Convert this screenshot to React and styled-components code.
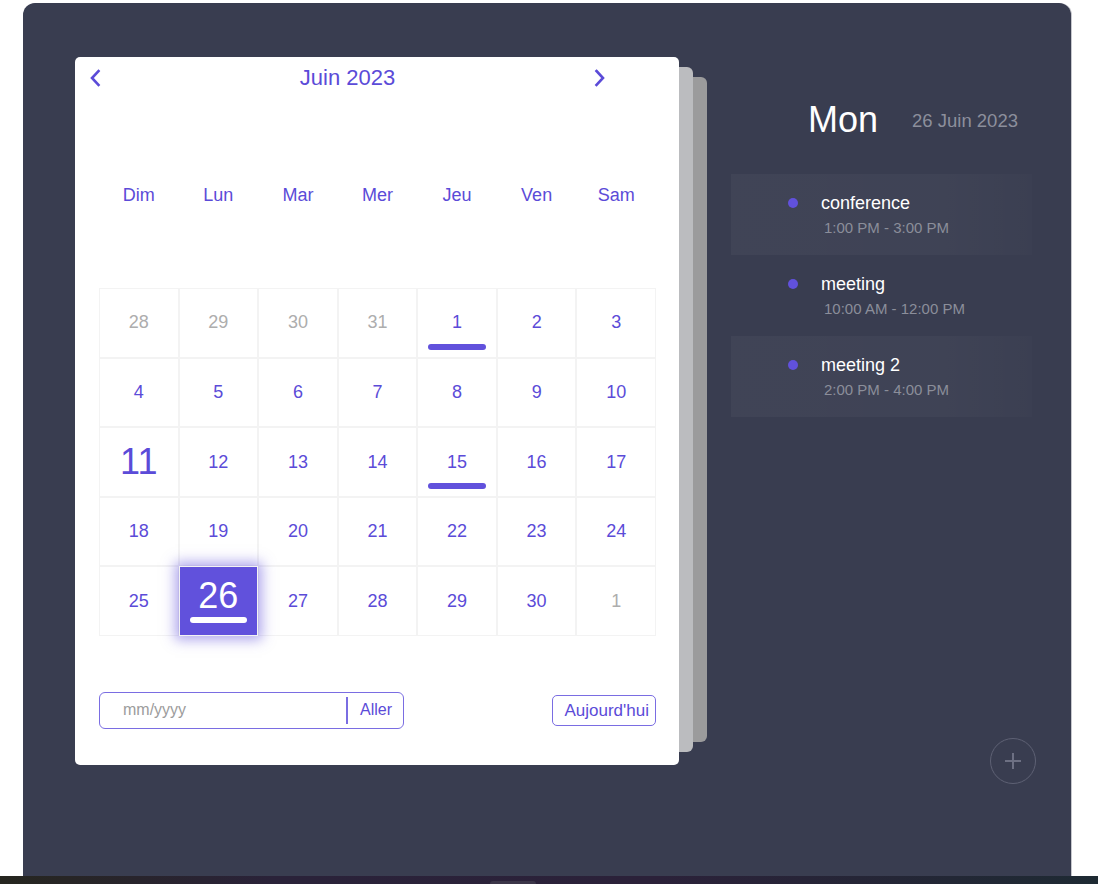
import React from "react";
import styled, { createGlobalStyle } from "styled-components";

const GlobalStyle = createGlobalStyle`
  * { box-sizing: border-box; }
  html, body { margin: 0; padding: 0; background: #ffffff; }
  body { font-family: "Liberation Sans", Arial, sans-serif; overflow: hidden; }
`;

const PURPLE = "#5b4bd8";
const FILL = "#6151dc";

const weekdays = ["Dim", "Lun", "Mar", "Mer", "Jeu", "Ven", "Sam"];

const days = [
  { n: 28, out: true }, { n: 29, out: true }, { n: 30, out: true }, { n: 31, out: true },
  { n: 1, event: true }, { n: 2 }, { n: 3 },
  { n: 4 }, { n: 5 }, { n: 6 }, { n: 7 }, { n: 8 }, { n: 9 }, { n: 10 },
  { n: 11, big: true }, { n: 12 }, { n: 13 }, { n: 14 }, { n: 15, event: true }, { n: 16 }, { n: 17 },
  { n: 18 }, { n: 19 }, { n: 20 }, { n: 21 }, { n: 22 }, { n: 23 }, { n: 24 },
  { n: 25 }, { n: 26, selected: true }, { n: 27 }, { n: 28 }, { n: 29 }, { n: 30 }, { n: 1, out: true },
];

const events = [
  { title: "conference", time: "1:00 PM - 3:00 PM" },
  { title: "meeting", time: "10:00 AM - 12:00 PM" },
  { title: "meeting 2", time: "2:00 PM - 4:00 PM" },
];

const Page = styled.div`
  display: flex;
  flex-direction: column;
  height: 884px;
`;

const Shell = styled.div`
  padding: 3px 27px 0 23px;
`;

const Panel = styled.main`
  height: 873px;
  background: #393d50;
  border-radius: 12px 12px 0 0;
  box-shadow: 1px 0 0 #c6c7cd;
  display: flex;
  padding: 54px 0 0 52px;
  gap: 52px;
`;

const Taskbar = styled.div`
  height: 8px;
  background: linear-gradient(90deg, #26261f, #2a2239 25%, #2b2139 60%, #1e2a33);
  display: flex;
  justify-content: center;
  span {
    width: 46px;
    height: 3px;
    margin-top: 5px;
    margin-right: 72px;
    border-radius: 3px 3px 0 0;
    background: #3b3548;
  }
`;

const CardStack = styled.div`
  position: relative;
  isolation: isolate;
  width: 604px;
  height: 708px;
  &::before,
  &::after {
    content: "";
    position: absolute;
    left: 0;
    border-radius: 6px;
  }
  &::before {
    top: 10px;
    bottom: 13px;
    right: -14px;
    background: #bbbcbf;
    z-index: -1;
  }
  &::after {
    top: 20px;
    bottom: 23px;
    right: -28px;
    background: #9b9b9c;
    z-index: -2;
  }
`;

const Card = styled.section`
  height: 100%;
  background: #ffffff;
  border-radius: 5px;
  padding: 0 23px 36px 24px;
  display: flex;
  flex-direction: column;
`;

const Header = styled.div`
  height: 42px;
  display: flex;
  align-items: center;
  justify-content: space-between;
  margin: 0 50px 0 -10px;
`;

const Arrow = styled.button`
  border: 0;
  background: none;
  padding: 0;
  width: 12px;
  height: 18px;
  display: flex;
  cursor: pointer;
`;

const Title = styled.h2`
  margin: 0;
  font-weight: 400;
  font-size: 22px;
  color: ${PURPLE};
`;

const WeekRow = styled.div`
  margin-top: 85px;
  display: grid;
  grid-template-columns: repeat(7, 1fr);
  line-height: 22px;
  font-size: 18px;
  color: ${PURPLE};
  text-align: center;
`;

const Grid = styled.div`
  margin-top: 82px;
  display: grid;
  grid-template-columns: repeat(7, 1fr);
  grid-auto-rows: 69.6px;
`;

const Cell = styled.div`
  position: relative;
  display: flex;
  flex-direction: column;
  align-items: center;
  justify-content: center;
  gap: 1px;
  border: 1px solid #f3f3f3;
  font-size: ${(p) => (p.$big || p.$selected ? "36px" : "18px")};
  color: ${(p) => (p.$selected ? "#ffffff" : p.$out ? "#adadad" : PURPLE)};
  background: ${(p) => (p.$selected ? FILL : "transparent")};
  box-shadow: ${(p) => (p.$selected ? "0 0 12px 4px rgba(97, 81, 220, 0.5)" : "none")};
  z-index: ${(p) => (p.$selected ? 1 : 0)};
  line-height: 1.15;
`;

const EventBar = styled.span`
  position: absolute;
  left: 50%;
  bottom: 7px;
  transform: translateX(-50%);
  width: 58px;
  height: 6px;
  border-radius: 3px;
  background: ${FILL};
`;

const TodayBar = styled.span`
  width: 57px;
  height: 6px;
  margin-bottom: 4px;
  border-radius: 3px;
  background: #ffffff;
`;

const Footer = styled.div`
  margin-top: 56px;
  display: flex;
  align-items: center;
  justify-content: space-between;
`;

const JumpBox = styled.form`
  width: 305px;
  height: 37px;
  border: 1px solid #7a6de2;
  border-radius: 6px;
  display: flex;
  align-items: center;
  padding: 0 11px 0 23px;
`;

const JumpInput = styled.input`
  flex: 1;
  border: 0;
  outline: none;
  padding: 0;
  font: 16px "Liberation Sans", Arial, sans-serif;
  color: ${PURPLE};
  &::placeholder { color: #9c9c9c; }
`;

const JumpButton = styled.button`
  border: 0;
  border-left: 2px solid #7a6de2;
  background: none;
  height: 27px;
  padding: 0 0 0 12px;
  font: 16px "Liberation Sans", Arial, sans-serif;
  color: ${PURPLE};
  cursor: pointer;
`;

const TodayButton = styled.button`
  height: 31px;
  margin-top: 1px;
  padding: 0 6px 0 11px;
  border: 1px solid #7a6de2;
  border-radius: 5px;
  background: #ffffff;
  font: 17px "Liberation Sans", Arial, sans-serif;
  color: ${PURPLE};
  cursor: pointer;
`;

const Side = styled.aside`
  width: 305px;
  display: flex;
  flex-direction: column;
`;

const DayHeading = styled.div`
  margin-top: 42px;
  padding-left: 77px;
  display: flex;
  align-items: center;
  gap: 34px;
`;

const DayName = styled.span`
  font-size: 36px;
  color: #ffffff;
`;

const DayDate = styled.span`
  font-size: 18.5px;
  color: #8c8f9c;
  margin-top: 1px;
`;

const EventList = styled.ul`
  list-style: none;
  margin: 33px 0 0;
  padding: 0;
  width: 301px;
`;

const EventItem = styled.li`
  height: 81px;
  display: flex;
  gap: 23px;
  padding: 19px 0 0 57px;
  background: ${(p) =>
    p.$shaded
      ? "linear-gradient(90deg, rgba(255,255,255,0.035), rgba(255,255,255,0.03) 70%, rgba(255,255,255,0.01))"
      : "transparent"};
`;

const Dot = styled.span`
  flex: none;
  width: 10px;
  height: 10px;
  margin-top: 5px;
  border-radius: 50%;
  background: #6151dc;
`;

const EventText = styled.div`
  display: flex;
  flex-direction: column;
  gap: 5px;
`;

const EventTitle = styled.span`
  font-size: 18px;
  line-height: 21px;
  color: #ffffff;
`;

const EventTime = styled.span`
  font-size: 15px;
  line-height: 17px;
  padding-left: 3px;
  color: #8b8e9a;
`;

const AddButton = styled.button`
  align-self: flex-end;
  margin-top: 321px;
  width: 46px;
  height: 46px;
  border-radius: 50%;
  border: 1.5px solid #5e6174;
  background: none;
  display: flex;
  align-items: center;
  justify-content: center;
  padding: 0;
  cursor: pointer;
`;

const Chevron = ({ dir }) => (
  <svg width="12" height="18" viewBox="0 0 12 18">
    <path
      d={dir === "left" ? "M9.5 2 L3 9 L9.5 16" : "M2.5 2 L9 9 L2.5 16"}
      fill="none"
      stroke={PURPLE}
      strokeWidth="2.6"
      strokeLinecap="square"
    />
  </svg>
);

export default function App() {
  return (
    <Page>
      <GlobalStyle />
      <Shell>
        <Panel>
          <CardStack>
            <Card>
              <Header>
                <Arrow aria-label="Mois précédent"><Chevron dir="left" /></Arrow>
                <Title>Juin 2023</Title>
                <Arrow aria-label="Mois suivant"><Chevron dir="right" /></Arrow>
              </Header>
              <WeekRow>
                {weekdays.map((d) => (
                  <span key={d}>{d}</span>
                ))}
              </WeekRow>
              <Grid>
                {days.map((d, i) => (
                  <Cell key={i} $out={d.out} $big={d.big} $selected={d.selected}>
                    <span>{d.n}</span>
                    {d.selected && <TodayBar />}
                    {d.event && <EventBar />}
                  </Cell>
                ))}
              </Grid>
              <Footer>
                <JumpBox onSubmit={(e) => e.preventDefault()}>
                  <JumpInput placeholder="mm/yyyy" />
                  <JumpButton type="submit">Aller</JumpButton>
                </JumpBox>
                <TodayButton>Aujourd'hui</TodayButton>
              </Footer>
            </Card>
          </CardStack>
          <Side>
            <DayHeading>
              <DayName>Mon</DayName>
              <DayDate>26 Juin 2023</DayDate>
            </DayHeading>
            <EventList>
              {events.map((ev, i) => (
                <EventItem key={ev.title} $shaded={i % 2 === 0}>
                  <Dot />
                  <EventText>
                    <EventTitle>{ev.title}</EventTitle>
                    <EventTime>{ev.time}</EventTime>
                  </EventText>
                </EventItem>
              ))}
            </EventList>
            <AddButton aria-label="Ajouter un événement">
              <svg width="20" height="20" viewBox="0 0 20 20">
                <path d="M10 2 V18 M2 10 H18" stroke="#6d7083" strokeWidth="2" />
              </svg>
            </AddButton>
          </Side>
        </Panel>
      </Shell>
      <Taskbar>
        <span />
      </Taskbar>
    </Page>
  );
}
